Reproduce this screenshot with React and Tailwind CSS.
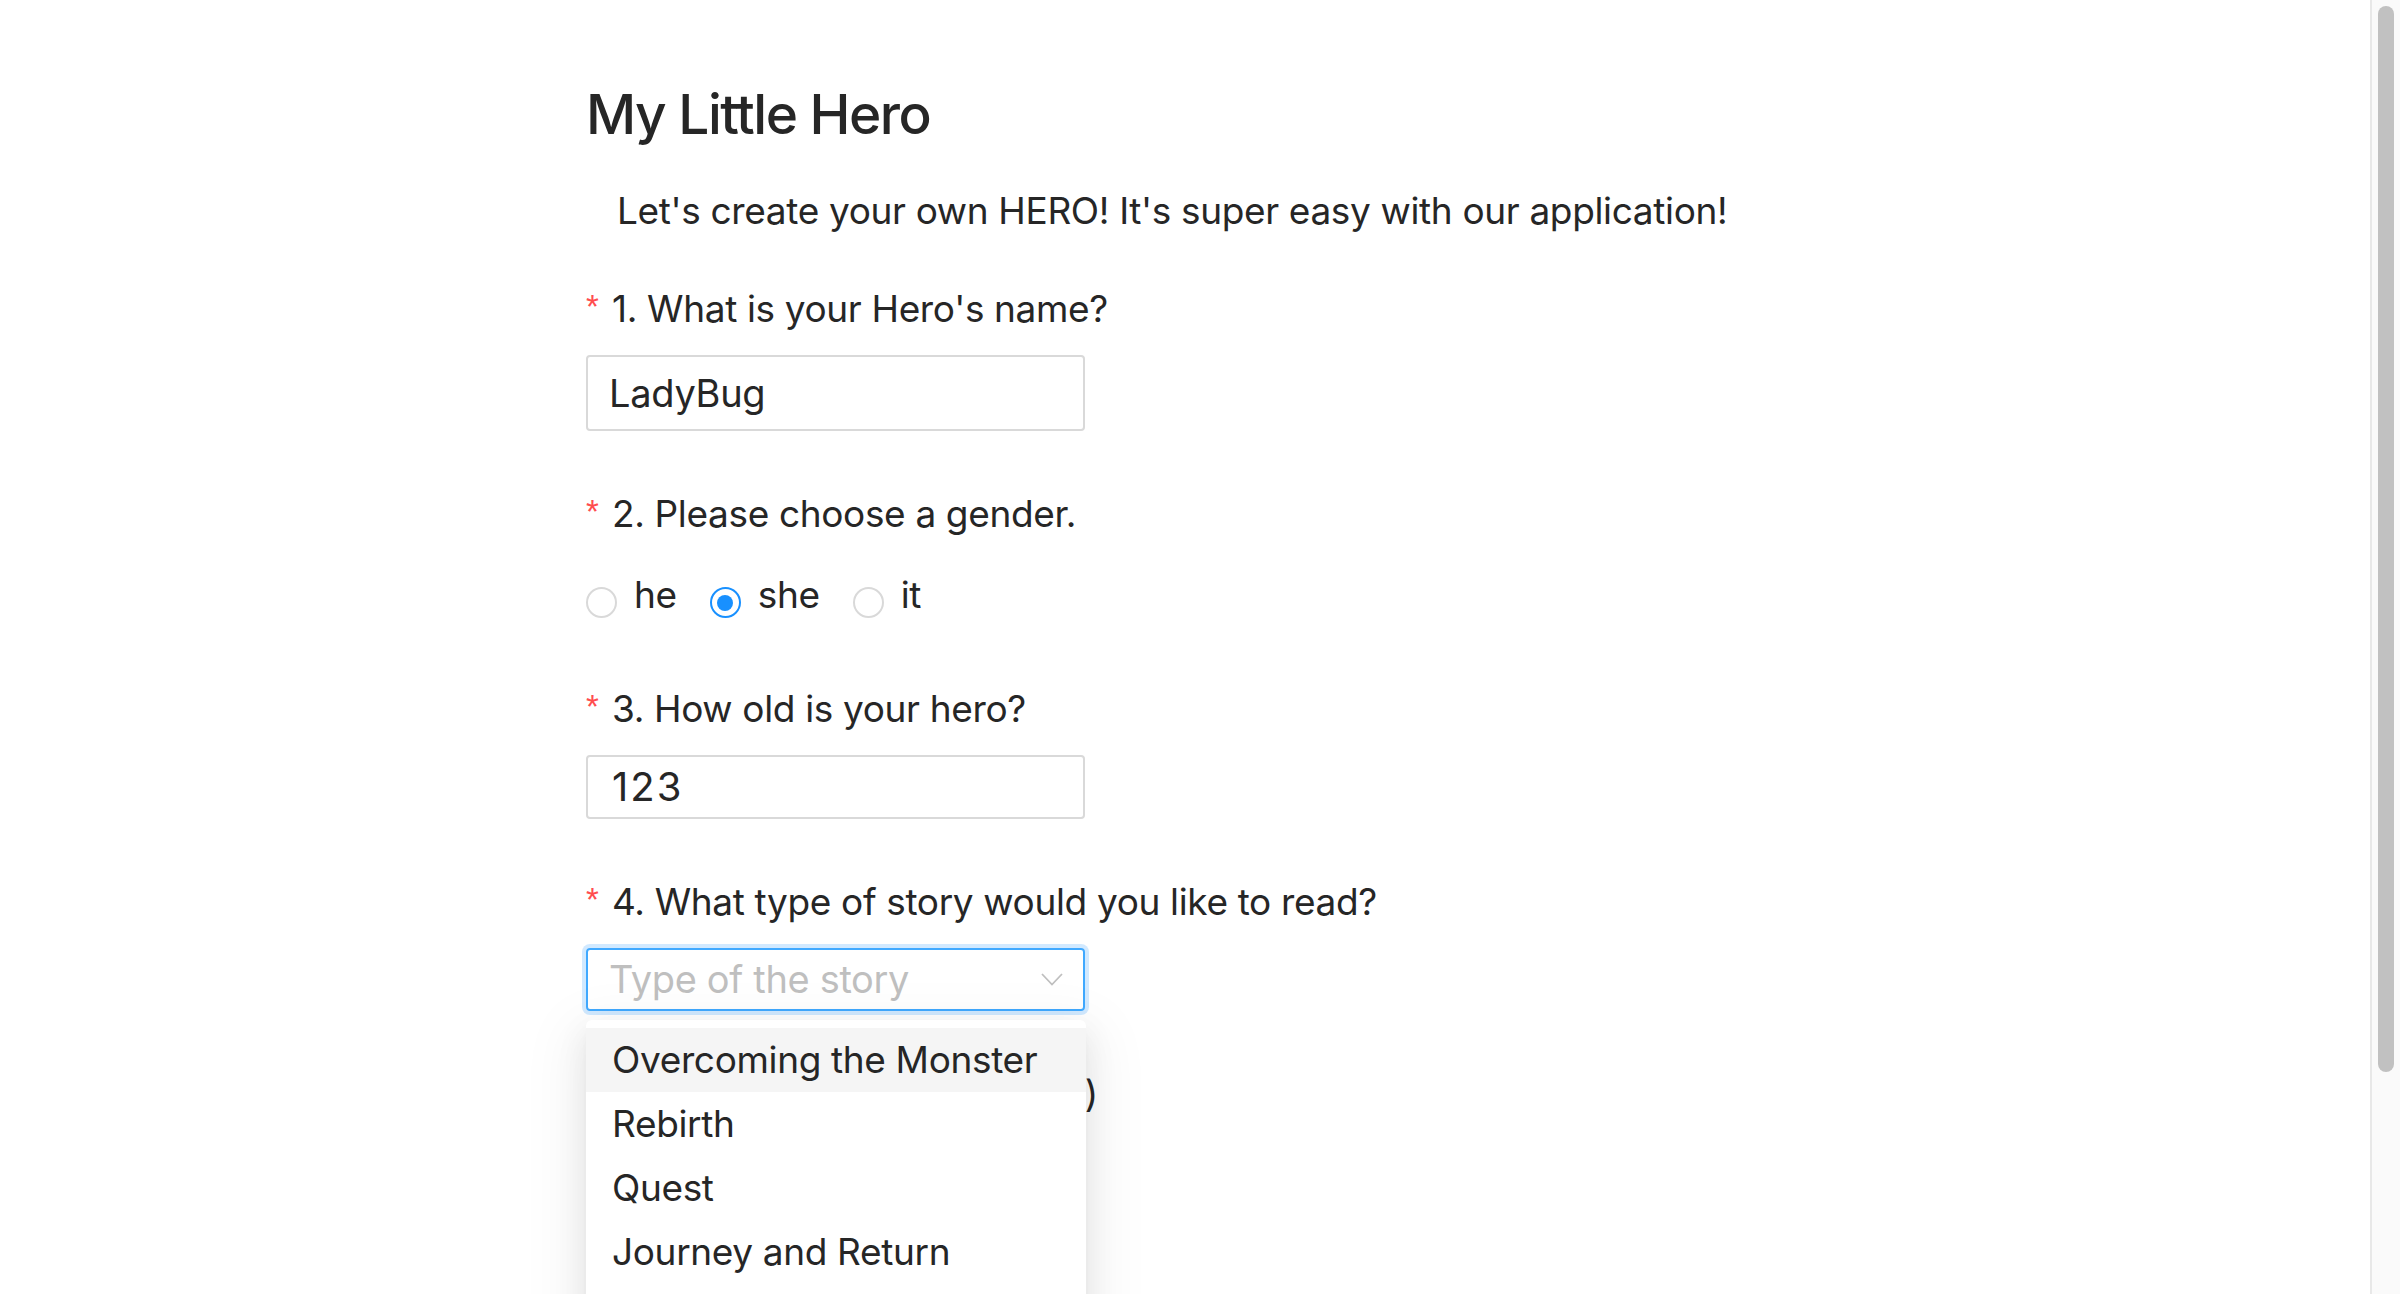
import React from "react";

const font = { fontFamily: "Inter, 'Noto Sans', sans-serif" };

function Label({ children, className = "" }) {
  return (
    <div className={"flex items-start h-[56px] leading-[56px] text-[37px] tracking-[-0.35px] whitespace-nowrap text-[#262626] " + className}>
      <span className="text-[#ff4d4f] text-[33px] leading-[30px] mt-[11px] w-[26px] shrink-0 font-['Liberation_Sans',sans-serif]">*</span>
      <span>{children}</span>
    </div>
  );
}

function Radio({ checked, label }) {
  return (
    <label className="flex items-start mr-[33px]">
      <span
        className={
          "mt-[20px] w-[31px] h-[31px] rounded-full border-2 bg-white flex items-center justify-center " +
          (checked ? "border-[#1890ff]" : "border-[#d9d9d9]")
        }
      >
        {checked && <span className="w-[16px] h-[16px] rounded-full bg-[#1890ff]" />}
      </span>
      <span className="ml-[17px] text-[37px] leading-[56px] tracking-[-0.35px] text-[#262626]">{label}</span>
    </label>
  );
}

export default function App() {
  const options = [
    "Overcoming the Monster",
    "Rebirth",
    "Quest",
    "Journey and Return",
    "Rags to Riches",
    "Comedy",
    "Tragedy",
  ];
  return (
    <div className="flex h-screen w-full overflow-hidden bg-white" style={font}>
      <main className="flex-1 min-w-0 overflow-hidden">
        <div className="pl-[586px] pt-[87px]">
          <h2 className="text-[55px] leading-[55px] font-medium tracking-[-1.5px] text-[#262626]">My Little Hero</h2>
          <p className="mt-[41px] pl-[31px] text-[37px] leading-[56px] tracking-[-0.35px] text-[#262626] whitespace-nowrap">
            Let's create your own HERO! It's super easy with our application!
          </p>

          <Label className="mt-[42px]">1. What is your Hero's name?</Label>
          <div className="mt-[18px] w-[499px] h-[76px] border-2 border-[#d9d9d9] rounded-[4px] flex items-center pl-[21px] text-[38px] tracking-[-0.3px] text-[#262626]">
            LadyBug
          </div>

          <Label className="mt-[55px]">2. Please choose a gender.</Label>
          <div className="mt-[25px] flex h-[56px]">
            <Radio label="he" />
            <Radio label="she" checked />
            <Radio label="it" />
          </div>

          <Label className="mt-[58px]">3. How old is your hero?</Label>
          <div className="mt-[18px] w-[499px] h-[64px] border-2 border-[#d9d9d9] rounded-[4px] flex items-center pl-[24px] text-[40px] tracking-[2px] text-[#262626]">
            123
          </div>

          <Label className="mt-[55px]">4. What type of story would you like to read?</Label>
          <div className="relative mt-[18px] w-[499px]">
            <div className="h-[63px] border-2 border-[#40a9ff] rounded-[4px] shadow-[0_0_0_4px_rgba(24,144,255,0.2)] flex items-center pl-[21px] pr-[20px] text-[38px] tracking-[-0.35px] text-[#bfbfbf] whitespace-nowrap">
              <span className="flex-1">Type of the story</span>
              <svg width="22" height="13" viewBox="0 0 22 13" fill="none">
                <path d="M1 1L11 11.5L21 1" stroke="#bfbfbf" strokeWidth="1.8" />
              </svg>
            </div>
            <div className="absolute z-10 left-0 top-[72px] w-[500px] bg-white rounded-[6px] py-[8px] shadow-[0_6px_12px_-8px_rgba(0,0,0,0.12),0_12px_32px_0_rgba(0,0,0,0.08),0_18px_56px_16px_rgba(0,0,0,0.05)]">
              {options.map((o, i) => (
                <div
                  key={o}
                  className={
                    "h-[64px] flex items-center pl-[26px] text-[37px] tracking-[-0.35px] whitespace-nowrap text-[#262626] " +
                    (i === 0 ? "bg-[#f5f5f5]" : "")
                  }
                >
                  {o}
                </div>
              ))}
            </div>
          </div>

          <Label className="mt-[55px]">
            <span className="inline-block w-[486px] text-right">5. Pick a superpower (one)</span>
          </Label>
          <div className="h-[400px]" />
        </div>
      </main>
      <div className="w-[30px] shrink-0 h-full bg-[#fafafa] border-l-2 border-[#e8e8e8] pt-[6px] flex justify-center">
        <div className="w-[16px] h-[1066px] rounded-full bg-[#c1c1c1]" />
      </div>
    </div>
  );
}
